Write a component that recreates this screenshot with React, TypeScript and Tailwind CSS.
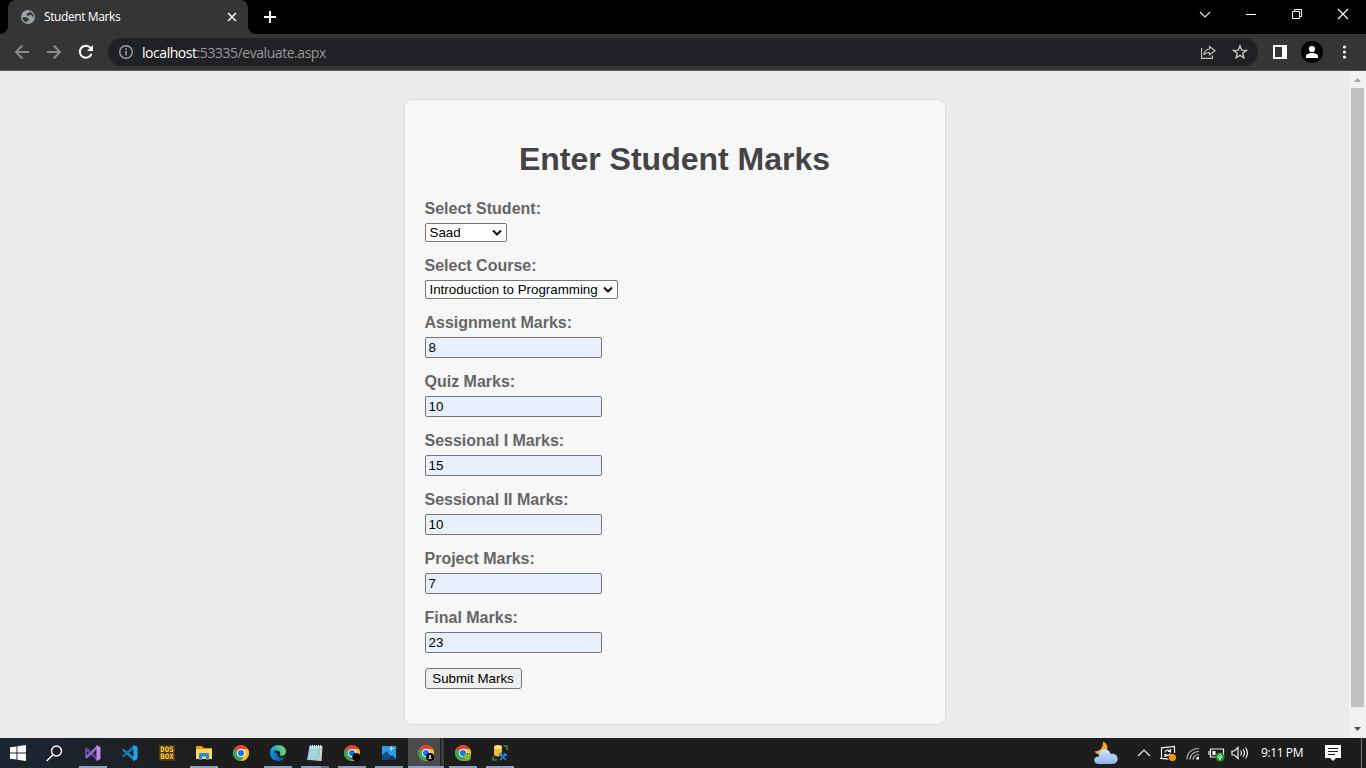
import React from "react";

const ui = "font-['Open_Sans','Noto_Sans',sans-serif]";

function Toolbar() {
  return (
    <header className={`h-[71px] shrink-0 bg-black ${ui}`}>
      <div className="flex h-[34px] items-start">
        <div className="relative ml-2 flex h-[34px] w-60 items-center rounded-t-lg bg-[#353535]">
          <svg className="absolute -left-2 bottom-0" width="8" height="8" fill="#353535"><path d="M8 0V8H0A8 8 0 0 0 8 0Z" /></svg>
          <svg className="absolute -right-2 bottom-0" width="8" height="8" fill="#353535"><path d="M0 0V8H8A8 8 0 0 1 0 0Z" /></svg>
          <svg className="ml-3" width="16" height="16" viewBox="0 0 16 16">
            <circle cx="8" cy="8" r="7" fill="#9aa0a6" />
            <path d="M2.600 8.200h3.700c1.500 0 1.900.7 1.900 1.800H9v1.800H6.700v1.700A5.700 5.700 0 0 1 2.600 8.200ZM9.300 2.500c2.600.6 4.400 2.800 4.500 5.300h-1.300c-.2-1.200-.9-1.700-2.200-1.700-.8 0-1.200.6-2.200.6-.9 0-1.400-.5-1.400-1.300 0-1 .7-1.400 1.500-1.400 1 0 1.100-.4 1.100-1.500Z" fill="#353535" />
          </svg>
          <span className="ml-2 w-[180px] text-[12px] tracking-[-0.4px] whitespace-nowrap text-white">Student Marks</span>
          <svg width="16" height="16" viewBox="0 0 16 16" stroke="#f1f1f1" strokeWidth="1.600"><path d="m4 4 8 8M12 4l-8 8" /></svg>
        </div>
        <svg className="mt-[9px] ml-[14px]" width="16" height="16" viewBox="0 0 16 16" stroke="#fff" strokeWidth="2"><path d="M8 2v12M2 8h12" /></svg>
        <svg className="mt-[9px] ml-auto" width="12" height="12" viewBox="0 0 12 12" fill="none" stroke="#e8e8e8" strokeWidth="1.100"><path d="m1 3 5 5 5-5" /></svg>
        <svg className="mt-[9px] ml-[34px]" width="12" height="12" viewBox="0 0 12 12" stroke="#fff"><path d="M1 5.500h10" /></svg>
        <svg className="mt-[9px] ml-[34px]" width="12" height="12" viewBox="0 0 12 12" fill="none" stroke="#fff"><path d="M1.500 2.500h7v7h-7zM3.500 2.500v-2h7v7h-2" /></svg>
        <svg className="mt-[8px] mr-[17px] ml-[34px]" width="12" height="12" viewBox="0 0 12 12" stroke="#fff" strokeWidth="1.200"><path d="m1 1 10 10M11 1 1 11" /></svg>
      </div>
      <div className="flex h-[37px] items-center border-b border-[#5a5a5a] bg-[#353535]">
        <svg className="ml-[14px]" width="16" height="16" viewBox="0 0 16 16" fill="none" stroke="#8b8b8b" strokeWidth="1.900"><path d="M15 8H2M8.300 1.500 2 8l6.300 6.500" /></svg>
        <svg className="ml-[16px]" width="16" height="16" viewBox="0 0 16 16" fill="none" stroke="#8b8b8b" strokeWidth="1.900"><path d="M1 8h13M7.700 1.500 14 8l-6.300 6.500" /></svg>
        <svg className="ml-[16px]" width="16" height="16" viewBox="0 0 16 16" fill="none" stroke="#fff" strokeWidth="2"><path d="M13.500 9.800A6 6 0 1 1 12.600 4" /><path d="M15 1v6H9z" fill="#fff" stroke="none" /></svg>
        <div className="ml-[14px] flex h-7 w-[1150px] items-center rounded-full bg-[#202124]">
          <svg className="ml-[10px]" width="16" height="16" viewBox="0 0 16 16" fill="none" stroke="#9aa0a6" strokeWidth="1.400"><circle cx="8" cy="8" r="6.300" /><path d="M8 7v4.500M8 4.300v1.600" strokeWidth="1.600" /></svg>
          <span className="ml-2 text-[14px] tracking-[-0.45px] whitespace-nowrap text-[#969696]"><span className="text-white">localhost</span>:53335/evaluate.aspx</span>
          <svg className="ml-auto" width="16" height="16" viewBox="0 0 16 16" fill="none" stroke="#c0c0c0" strokeWidth="1.200"><path d="M1.600 4v10.400h10.800v-2.800M9.500 2.500 15 6.700l-5.500 4.200V8.500c-2.800 0-4.300.7-5.500 2.500.3-3.500 2-5.700 5.500-6z" /></svg>
          <svg className="mr-[10px] ml-4" width="16" height="16" viewBox="0 0 16 16" fill="none" stroke="#c4c4c4" strokeWidth="1.400"><path d="m8 1.900 1.700 4.200 4.600.3-3.500 2.900 1.100 4.500L8 11.400l-3.900 2.400 1.100-4.500-3.500-2.900 4.600-.3z" /></svg>
        </div>
        <svg className="ml-[15px]" width="14" height="14"><path d="M0 0h14v14H0z" fill="#fff" /><path d="M2 2h7v10H2z" fill="#353535" /></svg>
        <svg className="ml-[14px]" width="22" height="22" viewBox="0 0 22 22"><circle cx="11" cy="11" r="11" /><circle cx="11" cy="8" r="3.100" fill="#fff" /><path d="M5 17v-1.800c0-2.200 3.400-3.200 6-3.200s6 1 6 3.200V17z" fill="#fff" /></svg>
        <svg className="ml-[18px]" width="7" height="16" fill="#fff"><circle cx="3.500" cy="3" r="1.600" /><circle cx="3.500" cy="8" r="1.600" /><circle cx="3.500" cy="13" r="1.600" /></svg>
      </div>
    </header>
  );
}

function Dropdown({ label, value, width }: { label: string; value: string; width: string }) {
  return (
    <div className="mb-[15px]">
      <label className="mb-[5px] block h-[18px] text-base leading-[18px] font-bold text-[#666]">{label}</label>
      <div className={`flex h-[19px] items-center justify-between rounded-[2px] border border-[#767676] bg-white pr-1 pl-[4px] text-[13.333px] leading-[15px] text-black ${width}`}>
        <span className="whitespace-nowrap">{value}</span>
        <svg width="10" height="8" viewBox="0 0 10 8" fill="none" stroke="#101010" strokeWidth="2"><path d="m1 1.500 4 4 4-4" /></svg>
      </div>
    </div>
  );
}

function Field({ label, value }: { label: string; value: string }) {
  return (
    <div className="mb-[15px]">
      <label className="mb-[5px] block h-[18px] text-base leading-[18px] font-bold text-[#666]">{label}</label>
      <input className="block h-[21px] w-[177px] rounded-[2px] border border-[#767676] bg-[#e8f0fe] px-[3px] text-[13.333px] text-black outline-none" defaultValue={value} />
    </div>
  );
}

function Chrome({ badge }: { badge?: React.ReactNode }) {
  return (
    <svg width="18" height="18" viewBox="-0.5 -0.5 18 18">
      <circle cx="8.500" cy="8.500" r="8" fill="#ea4335" />
      <path d="M8.500 8.500 1.570 4.500A8 8 0 0 0 8.500 16.500L12 10.500z" fill="#34a853" />
      <path d="M8.500 4.500h6.930A8 8 0 0 1 8.500 16.500l3.460-6z" fill="#fbc116" />
      <circle cx="8.500" cy="8.500" r="4.100" fill="#fff" />
      <circle cx="8.500" cy="8.500" r="3.100" fill="#1a73e8" />
      {badge}
    </svg>
  );
}

function VisualStudio() {
  return (
    <svg width="18" height="18" viewBox="0 0 18 18">
      <path d="m1 4.500 2-1 10 9.500v3.500L3 7.500v4.700L1 13.500z" fill="#6844a5" />
      <path d="m1 13.500 2 1L13 5V1.500L5.500 8.700 3 11z" fill="#9867d0" />
      <path d="m12.500 1 4 2v12l-4 2z" fill="#bd8af1" />
    </svg>
  );
}

function VsCode() {
  return (
    <svg width="18" height="18" viewBox="0 0 18 18">
      <path d="m1 6 1.400-1.200L13 13v4z" fill="#168bd2" />
      <path d="m1 12 1.400 1.200L13 5V1z" fill="#087dbd" />
      <path d="m12.500 1 4 2v12l-4 2z" fill="#24a5ee" />
    </svg>
  );
}

function DosBox() {
  return (
    <div className="flex h-4 w-4 flex-col items-center justify-center bg-[#5b3014] font-['DejaVu_Sans_Mono',monospace] text-[7.500px] leading-[7px] font-bold text-[#f5df40]">
      <span>DOS</span>
      <span>BOX</span>
    </div>
  );
}

function Explorer() {
  return (
    <svg width="18" height="18" viewBox="0 0 18 18">
      <path d="M1 2h6l2 2h8v3H1z" fill="#e6a100" />
      <path d="M1 5h16v10H1z" fill="#ffd65c" />
      <path d="M4 16V9.500L5 9h8l1 .5V16h-3v-3.500H7V16z" fill="#278bd9" />
    </svg>
  );
}

function Edge() {
  return (
    <svg width="18" height="18" viewBox="0 0 18 18">
      <defs>
        <linearGradient id="edgeTop"><stop stopColor="#199be2" /><stop offset="1" stopColor="#66df65" /></linearGradient>
        <linearGradient id="edgeLow" x2="1" y2="1"><stop stopColor="#168de0" /><stop offset="1" stopColor="#0754a5" /></linearGradient>
      </defs>
      <path d="M1 8c0 5 3.500 9 8.500 9 3 0 5-1.300 6.500-3.700-4 1.800-8 .2-8-4.300z" fill="url(#edgeLow)" />
      <path d="M1 8.500C1 4 5 1 9 1c4.600 0 8 3 8 6.500 0 2.600-1.800 4.200-4.200 4.200-1.600 0-2.600-.5-2-1.300 1.400-2-.4-4-3.200-4C4.500 6.400 2 7 1 8.500Z" fill="url(#edgeTop)" />
      <path d="M1 8.500c1-1.600 3.500-2.300 6-2-2.500 1.500-3.500 5.500-.5 9.800C3 15.500.8 12 1 8.500Z" fill="#1586d8" />
    </svg>
  );
}

function Notes() {
  return (
    <svg width="18" height="18" viewBox="0 0 18 18">
      <path d="M4 2h12.500l-1 15-12.500-1z" fill="#d9d5c8" />
      <path d="M3.500 2h11.500l-2 14H1z" fill="#92cbd5" />
      <path d="M4 5h9M3.500 8h9M3 11h9M2.700 14h8.800" stroke="#bce6ed" />
      <path d="M4.500 1v3M6.500 1v3M8.500 1v3M10.500 1v3M12.500 1v3M14.500 1v3" stroke="#f4f4f4" />
    </svg>
  );
}

function Photos() {
  return (
    <svg width="18" height="18" viewBox="0 0 18 18">
      <path d="M2 2h14v14H2z" fill="#2d9be5" />
      <path d="m2 11 4.500-4L14 16H2z" fill="#174b87" />
      <path d="m7 16 5-5 4 4v1z" fill="#103a6d" />
      <path d="M11.500 2.500v4M9.500 4.500h4" stroke="#e3f3ff" />
    </svg>
  );
}

function Database() {
  return (
    <svg width="18" height="18" viewBox="0 0 18 18">
      <path d="M3 3v7.500c0 2.500 8 2.500 8 0V3z" fill="#f5bc29" />
      <ellipse cx="7" cy="3" rx="4" ry="2" fill="#ffdf81" />
      <path d="M12.500 2H16v4M2 12.500V16h4" fill="none" stroke="#46853f" strokeWidth="1.500" />
      <path d="m8.500 9.500 6.500 6.500M15 10l-6 6" stroke="#248edb" strokeWidth="1.600" />
      <path d="m8 11.500 2.500-3M12.500 9.500l3.500 2" stroke="#248edb" strokeWidth="1.600" />
    </svg>
  );
}

function Task({ children, line = "bg-[#8da0bd]", active = false }: { children: React.ReactNode; line?: string; active?: boolean }) {
  return (
    <div className="relative h-[30px] w-[37px] shrink-0">
      {active && <div className="absolute top-0 left-0 h-[30px] w-8 bg-[#4b4b4b]" />}
      {active && <div className="absolute top-0 left-[33px] h-[30px] w-[3px] bg-[#3c3c3c]" />}
      <div className="relative flex h-[30px] w-[36px] items-center justify-center">{children}</div>
      <div className={`absolute bottom-0 h-0.5 ${active ? "left-0 w-9" : "left-1 w-7"} ${line}`} />
    </div>
  );
}

function Taskbar() {
  return (
    <footer className="flex h-[30px] shrink-0 items-center bg-[#1d1d1d] bg-linear-to-r from-[#1b2633] via-[#1d1d1d] via-15% to-[#1d1d1d]">
      <svg className="ml-[10px]" width="16" height="16" fill="#fff"><path d="M0 2.300 6.500 1.400V7.500H0zM7.400 1.300 16 0v7.500H7.400zM0 8.400h6.500v6.200L0 13.700zM7.400 8.400H16V16l-8.600-1.300z" /></svg>
      <svg className="ml-5" width="17" height="17" viewBox="0 0 17 17" fill="none" stroke="#fff" strokeWidth="1.400"><circle cx="10.500" cy="6" r="5" /><path d="m7 9.700-6.300 6.400" /></svg>
      <div className="ml-3 flex">
        <Task><VisualStudio /></Task>
        <Task line=""><VsCode /></Task>
        <Task line=""><DosBox /></Task>
        <Task><Explorer /></Task>
        <Task line=""><Chrome /></Task>
        <Task><Edge /></Task>
        <Task line="bg-linear-to-r from-[#8da0bd] from-70% to-[#65758b] to-70%"><Notes /></Task>
        <Task><Chrome badge={<circle cx="12.800" cy="12.500" r="4" />} /></Task>
        <Task><Photos /></Task>
        <Task active><Chrome badge={<g><circle cx="12.500" cy="12.500" r="4" /><circle cx="12.500" cy="11.500" r="1" fill="#fff" /><path d="M10.800 14.200c0-2 3.400-2 3.400 0z" fill="#fff" /></g>} /></Task>
        <Task><Chrome badge={<g><circle cx="12.500" cy="12.500" r="4" fill="#689f38" /><circle cx="12.500" cy="12.500" r="2" fill="none" stroke="#a5ca79" /></g>} /></Task>
        <Task><Database /></Task>
      </div>
      <svg className="ml-auto" width="26" height="26" viewBox="0 0 26 26">
        <defs><linearGradient id="cloud" x2="0" y2="1"><stop stopColor="#d3e4ff" /><stop offset="1" stopColor="#8bb4ee" /></linearGradient></defs>
        <path d="M10 1.500c5 2 6 7.500 2 11.500-3 2.500-8.500 2-10.500-1.500C6.500 11.500 10.500 8 10 1.500z" fill="#f4a62c" />
        <path d="M6 24c-7 0-6-8 0-7.500C5 8 16 7 17.500 14c9-1.500 9.500 10 1.500 10z" fill="url(#cloud)" />
      </svg>
      <svg className="ml-[18px]" width="14" height="14" viewBox="0 0 14 14" fill="none" stroke="#eee" strokeWidth="1.200"><path d="m1 10 6-6 6 6" /></svg>
      <svg className="ml-[8px]" width="18" height="18" viewBox="0 0 18 18" fill="none" stroke="#eee" strokeWidth="1.200"><path d="M15.500 9V2.500l-13 1.400v10.500l7 .8M1 14.500h7M6 8.500a3 3 0 0 1 5.500-1V5M11.500 7.500H9M11 9.500a3 3 0 0 1-5.200 1.200M6 13v-2.500h2.300" /><circle cx="13.500" cy="13.500" r="3.500" fill="#ff9400" stroke="none" /></svg>
      <svg className="ml-[8px]" width="16" height="16" viewBox="0 0 16 16" fill="none"><path d="M2 14.500C2 7.500 7 3.500 14 3.500M5 14.500c0-5 4-8 9-8M8 14.500c0-3 3-5 6-5" stroke="#bbb" strokeWidth="1.200" /><path d="M11 14.500c0-2 1-3 3-3v3z" fill="#eee" /></svg>
      <svg className="ml-[7px]" width="18" height="18" viewBox="0 0 18 18"><path d="M2.500 5h13v8h-13zM1 7v4" fill="none" stroke="#eee" strokeWidth="1.200" /><path d="M4.500 7h3v4h-3z" fill="#fff" /><circle cx="12" cy="13" r="4.500" fill="#149426" /><path d="M12 10c3 2 2 4.500 0 4.500s-3-2.500 0-4.500zm0 2v4" fill="none" stroke="#fff" /></svg>
      <svg className="ml-[5px]" width="18" height="16" viewBox="0 0 18 16" fill="none" stroke="#eee" strokeWidth="1.200"><path d="M1 6h2.500L7 2.500v11L3.500 10H1zM9.500 5.500q2 2.500 0 5M12 4q3 4 0 8M14.500 2.500q4 5.500 0 11" /></svg>
      <span className={`ml-[12px] w-[43px] text-[12px] leading-[16px] tracking-[-0.4px] whitespace-nowrap text-white ${ui}`}>9:11 PM</span>
      <svg className="ml-[21px]" width="16" height="16" viewBox="0 0 16 16"><path d="M0 0h16v13h-5l-3 3-3-3H0z" fill="#fff" /><path d="M3 3.500h10M3 6.500h10M3 9.500h7" stroke="#1d1d1d" /></svg>
      <div className="ml-[20px] h-[30px] w-px bg-[#777]" />
      <div className="w-1" />
    </footer>
  );
}

export default function App() {
  return (
    <div className="flex h-[768px] w-[1366px] flex-col overflow-hidden">
      <Toolbar />
      <div className="flex h-[667px] shrink-0">
        <main className="flex w-[1349px] justify-center bg-[#ebebeb] pt-7 font-['Liberation_Sans',Arial,sans-serif]">
          <section className="h-[626px] w-[542px] rounded-lg border border-[#ddd] bg-[#f7f7f7] px-5 pt-[41px]">
            <h1 className="mb-[22px] text-center text-[32px] leading-[37px] font-bold text-[#444]">Enter Student Marks</h1>
            <Dropdown label="Select Student:" value="Saad" width="w-[82px]" />
            <Dropdown label="Select Course:" value="Introduction to Programming" width="w-[193px]" />
            <Field label="Assignment Marks:" value="8" />
            <Field label="Quiz Marks:" value="10" />
            <Field label="Sessional I Marks:" value="15" />
            <Field label="Sessional II Marks:" value="10" />
            <Field label="Project Marks:" value="7" />
            <Field label="Final Marks:" value="23" />
            <button className="block h-[21px] w-[97px] rounded-[3px] border border-[#767676] bg-[#efefef] text-[13.333px] leading-[19px] whitespace-nowrap text-black">Submit Marks</button>
          </section>
        </main>
        <aside className="flex w-[17px] flex-col items-center bg-[#f1f1f1]">
          <svg width="17" height="17" fill="#a3a3a3"><path d="m5 11 3.500-4 3.500 4z" /></svg>
          <div className="h-[619px] w-[13px] bg-[#c1c1c1]" />
          <svg className="mt-[14px]" width="17" height="17" fill="#505050"><path d="m5 6 3.500 4L12 6z" /></svg>
        </aside>
      </div>
      <Taskbar />
    </div>
  );
}
